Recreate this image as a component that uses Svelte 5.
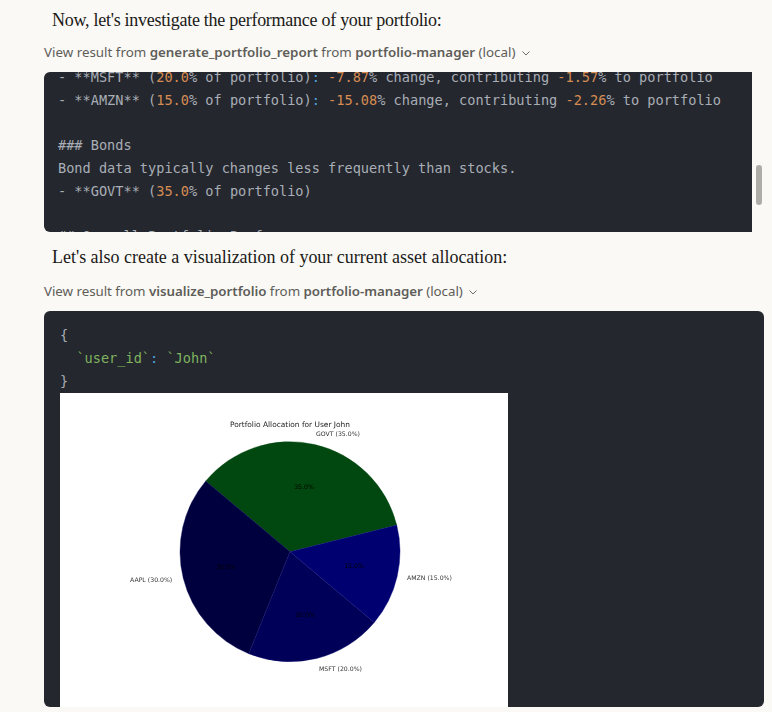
<script>
  const slices = [
    { name: "GOVT", from: 14, to: 140, color: "#00480f", edge: "#00480f" },
    { name: "AAPL", from: 140, to: 248, color: "#00003f", edge: "#0c0c5a" },
    { name: "MSFT", from: 248, to: 320, color: "#000058", edge: "#0c0c70" },
    { name: "AMZN", from: 320, to: 374, color: "#000070", edge: "#101080" },
  ];

  const cx = 230;
  const cy = 158.7;
  const r = 110;

  function slicePath(s) {
    const a = (s.from * Math.PI) / 180;
    const b = (s.to * Math.PI) / 180;
    const x1 = cx + r * Math.cos(a);
    const y1 = cy - r * Math.sin(a);
    const x2 = cx + r * Math.cos(b);
    const y2 = cy - r * Math.sin(b);
    const large = s.to - s.from > 180 ? 1 : 0;
    return `M${cx} ${cy}L${x1} ${y1}A${r} ${r} 0 ${large} 0 ${x2} ${y2}Z`;
  }

  const outer = [
    { text: "GOVT (35.0%)", x: 278, y: 43, anchor: "middle" },
    { text: "AAPL (30.0%)", x: 70, y: 189, anchor: "start" },
    { text: "MSFT (20.0%)", x: 259, y: 278, anchor: "start" },
    { text: "AMZN (15.0%)", x: 347, y: 187, anchor: "start" },
  ];

  const inner = [
    { text: "35.0%", x: 244, y: 96 },
    { text: "30.0%", x: 166, y: 176 },
    { text: "20.0%", x: 245, y: 224 },
    { text: "15.0%", x: 294, y: 175 },
  ];
</script>

<div class="page">
  <p class="say">Now, let's investigate the performance of your portfolio:</p>
  <div class="tool">
    View result from <b>generate_portfolio_report</b> from <b>portfolio-manager</b> (local)
    <svg class="chev" viewBox="0 0 10 10" width="10" height="10"><path d="M1.5 3.5 5 7l3.5-3.5" fill="none" stroke="currentColor" stroke-width="0.9" /></svg>
  </div>
  <div class="scroller">
    <div class="code first">
      <pre class="lifted">- **MSFT** (<i>20.0</i>% of portfolio)<em>:</em> <i>-7.87</i>% change, contributing <i>-1.57</i>% to portfolio
- **AMZN** (<i>15.0</i>% of portfolio)<em>:</em> <i>-15.08</i>% change, contributing <i>-2.26</i>% to portfolio

### Bonds
Bond data typically changes less frequently than stocks.
- **GOVT** (<i>35.0</i>% of portfolio)

## Overall Portfolio Performance</pre>
    </div>
    <div class="bar"></div>
  </div>

  <p class="say second">Let's also create a visualization of your current asset allocation:</p>
  <div class="tool narrow">
    View result from <b>visualize_portfolio</b> from <b>portfolio-manager</b> (local)
    <svg class="chev" viewBox="0 0 10 10" width="10" height="10"><path d="M1.5 3.5 5 7l3.5-3.5" fill="none" stroke="currentColor" stroke-width="0.9" /></svg>
  </div>
  <div class="code full">
    <pre>{"{"}
  <span class="str">`user_id`</span><em>:</em> <span class="str">`John`</span>
{"}"}</pre>
    <svg class="chart" viewBox="0 0 448 314" width="448" height="314">
      <rect width="448" height="314" fill="#fff" />
      <text class="title" x="230" y="34" text-anchor="middle">Portfolio Allocation for User John</text>
      {#each slices as s}
        <path d={slicePath(s)} fill={s.color} stroke={s.edge} stroke-width="0.4" />
      {/each}
      {#each outer as t}
        <text class="label" x={t.x} y={t.y} text-anchor={t.anchor}>{t.text}</text>
      {/each}
      {#each inner as t}
        <text class="label dark" x={t.x} y={t.y} text-anchor="middle">{t.text}</text>
      {/each}
    </svg>
  </div>
</div>

<style>
  :global(body) {
    background: #faf9f5;
  }

  .page {
    height: 712px;
    overflow: hidden;
    padding-top: 8px;
    box-sizing: border-box;
  }

  .say {
    margin: 0 0 0 52px;
    color: #1a1a18;
    font-family: "Liberation Serif", serif;
    font-size: 18px;
    letter-spacing: -0.27px;
    line-height: 24px;
  }

  .second {
    margin-top: 13px;
    letter-spacing: -0.02px;
  }

  .tool {
    margin: 11px 0 0 44px;
    height: 18px;
    color: #5e5d59;
    font-family: "Noto Sans", sans-serif;
    font-size: 13.35px;
    line-height: 18px;
  }

  .narrow {
    margin-top: 13px;
    letter-spacing: -0.04px;
  }

  .tool b {
    font-weight: 600;
  }

  .chev {
    margin-left: 2px;
    vertical-align: -1px;
  }

  .scroller {
    display: flex;
    margin: 11px 0 0 44px;
    gap: 4px;
  }

  .code {
    background: #24272e;
    overflow: hidden;
    box-sizing: border-box;
  }

  .first {
    width: 708px;
    height: 160px;
    padding-left: 14px;
    border-radius: 6px 0 0 6px;
  }

  .bar {
    width: 6px;
    height: 40px;
    margin-top: 93px;
    border-radius: 3px;
    background: #adaca6;
  }

  .full {
    width: 720px;
    height: 396px;
    margin: 11px 0 0 44px;
    padding: 13px 0 0 16px;
    border-radius: 6px;
  }

  pre {
    margin: 0;
    color: #a9aeb6;
    font-family: "DejaVu Sans Mono", monospace;
    font-size: 13.6px;
    line-height: 22.75px;
  }

  .lifted {
    margin-top: -6px;
  }

  pre i {
    font-style: normal;
    color: #d68c52;
  }

  pre em {
    font-style: normal;
    color: #4fa3e0;
  }

  .str {
    color: #7fb35f;
  }

  .chart {
    display: block;
    margin-top: 1px;
    filter: blur(0.35px);
  }

  .title {
    font-family: "DejaVu Sans", sans-serif;
    font-size: 7.45px;
    fill: #222;
  }

  .label {
    font-family: "DejaVu Sans", sans-serif;
    font-size: 6.2px;
    fill: #333;
  }

  .dark {
    fill: #000;
  }
</style>
